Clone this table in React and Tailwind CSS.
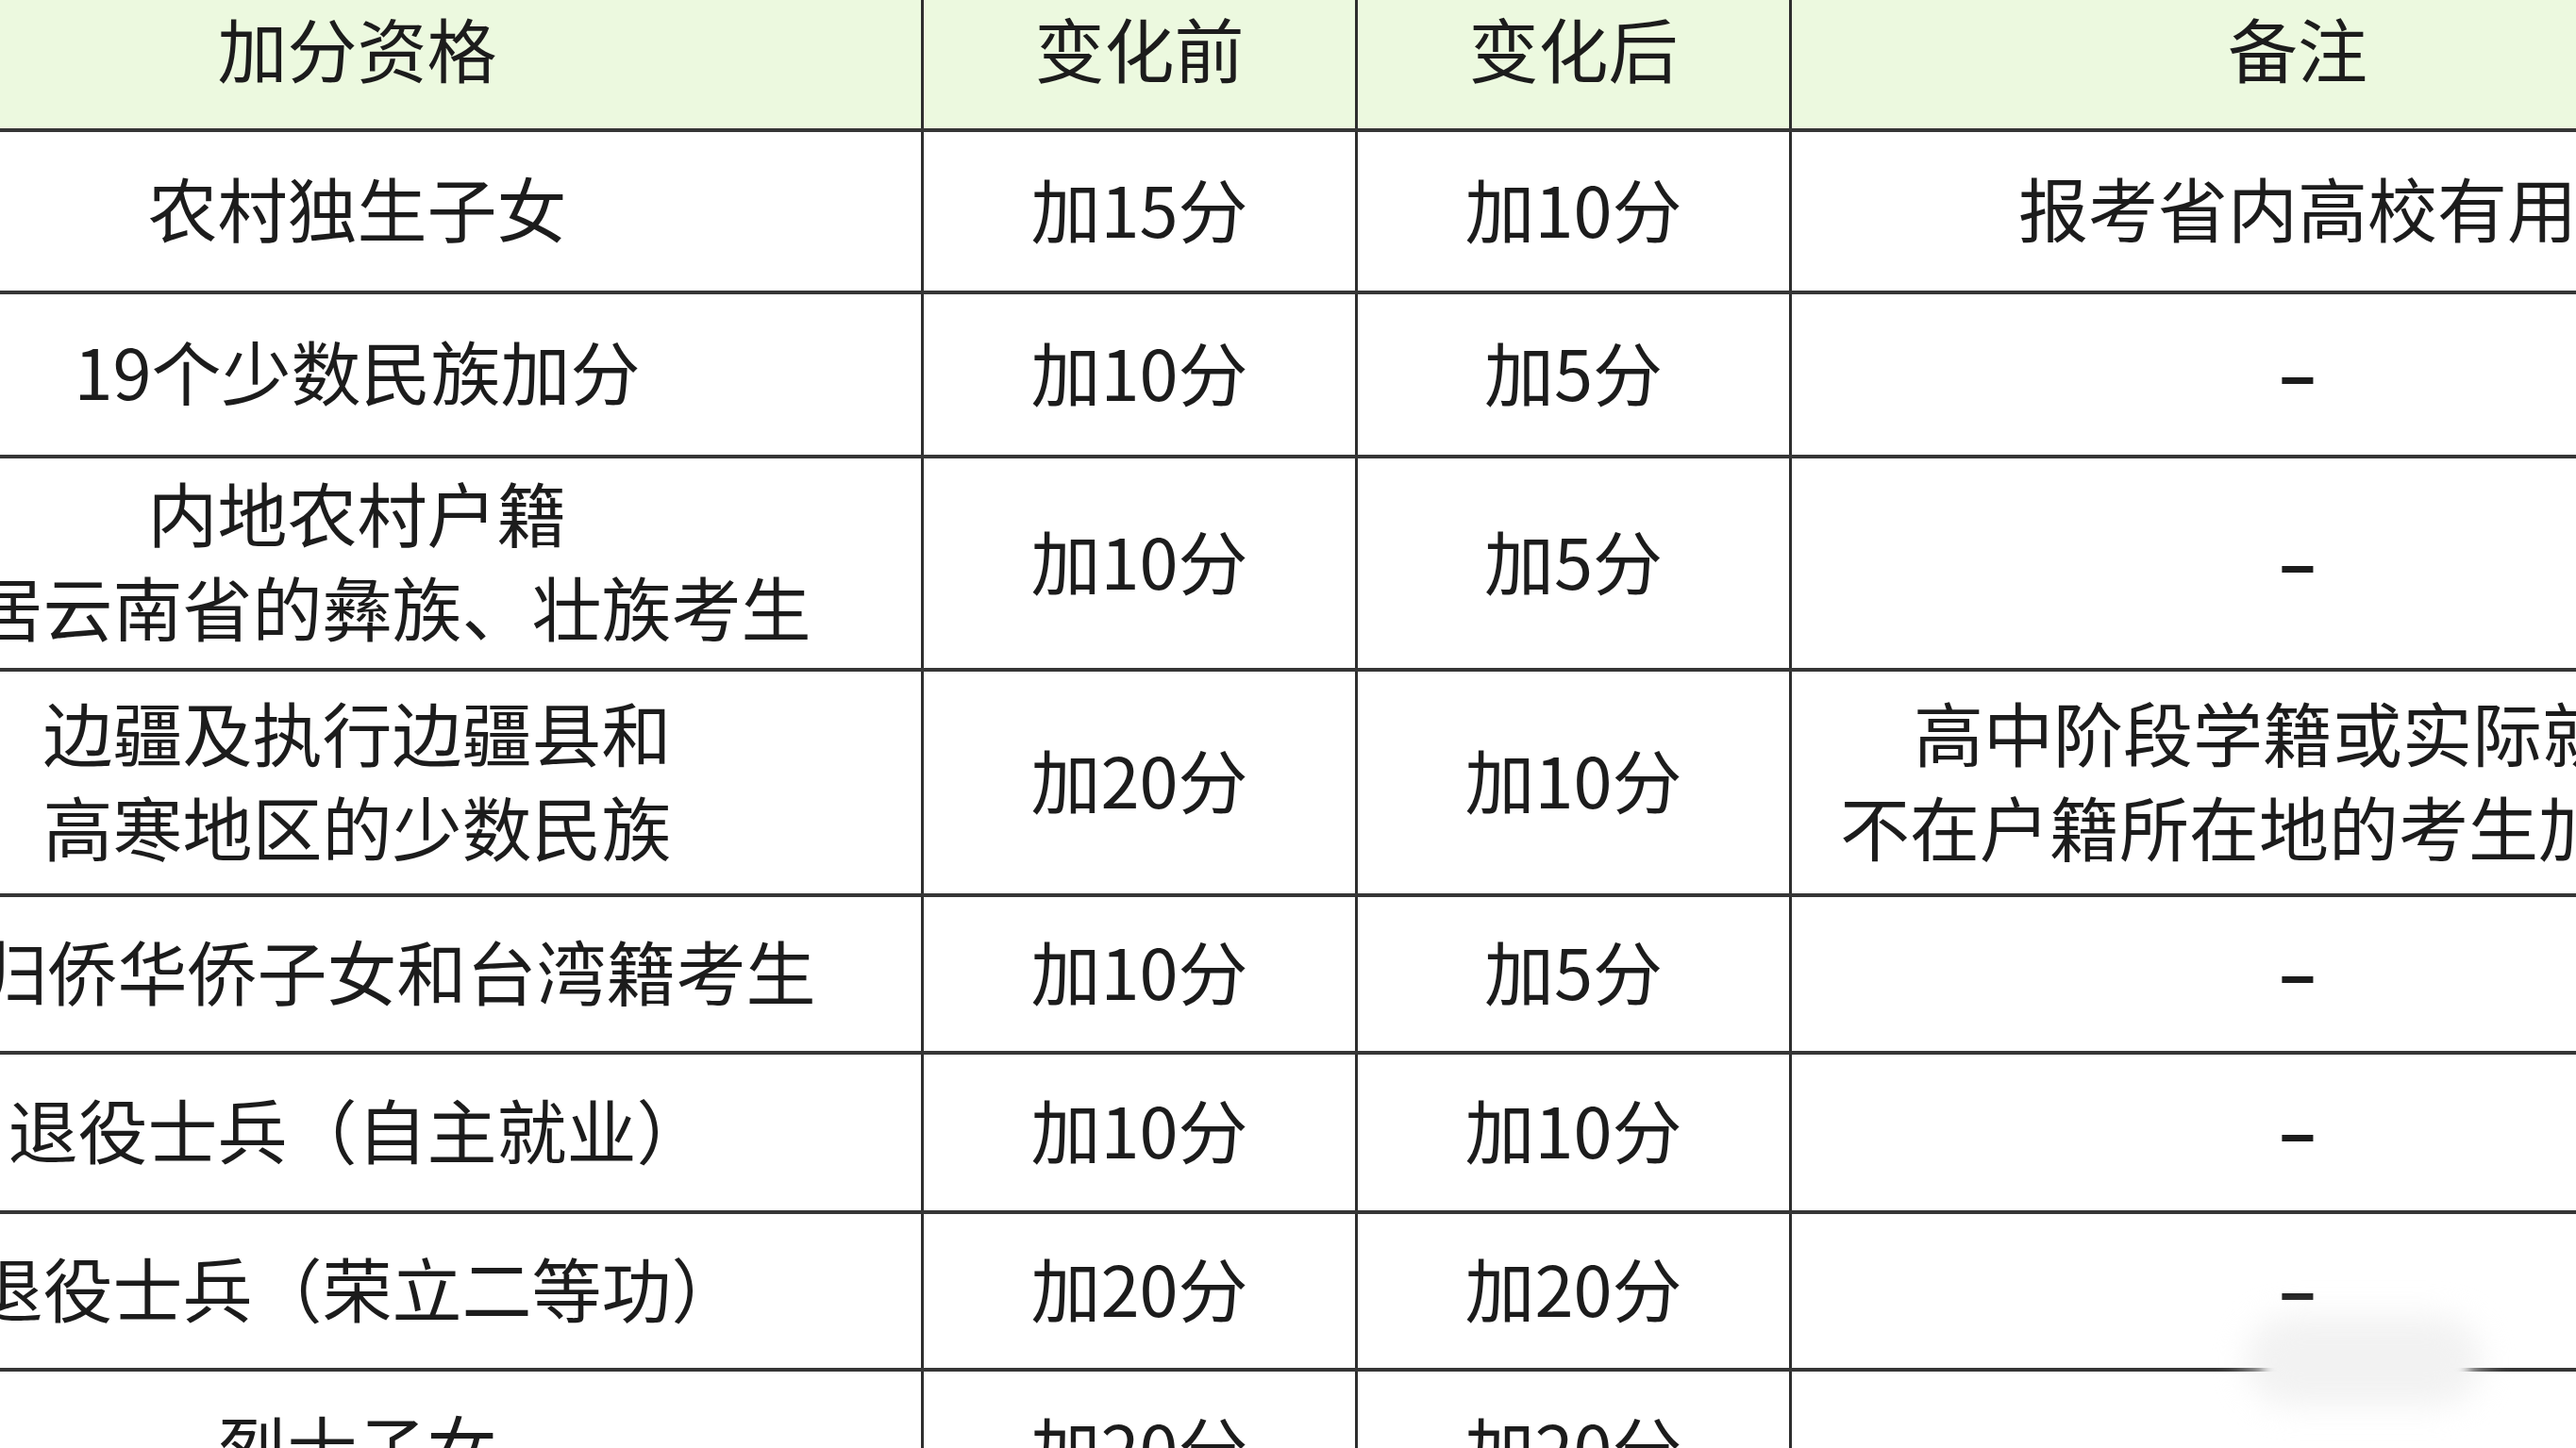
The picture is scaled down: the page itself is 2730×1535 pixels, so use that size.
import React from "react";

const rows = [
  { q: ["农村独生子女"], before: "加15分", after: "加10分", note: ["报考省内高校有用"], h: "h-[172px]" },
  { q: ["19个少数民族加分"], before: "加10分", after: "加5分", note: null, h: "h-[174px]" },
  { q: ["内地农村户籍", "聚居云南省的彝族、壮族考生"], before: "加10分", after: "加5分", note: null, h: "h-[226px]" },
  {
    q: ["边疆及执行边疆县和", "高寒地区的少数民族"],
    before: "加20分",
    after: "加10分",
    note: ["高中阶段学籍或实际就读", "不在户籍所在地的考生加10分"],
    h: "h-[239px]",
  },
  { q: ["归侨华侨子女和台湾籍考生"], before: "加10分", after: "加5分", note: null, h: "h-[167px]", shift: true },
  { q: ["退役士兵（自主就业）"], before: "加10分", after: "加10分", note: null, h: "h-[169px]" },
  { q: ["退役士兵（荣立二等功）"], before: "加20分", after: "加20分", note: null, h: "h-[167px]" },
  { q: ["烈士子女"], before: "加20分", after: "加20分", note: null, h: "h-[170px]" },
];

const Lines = ({ lines }) => (
  <div className="flex flex-col items-center leading-[100px] whitespace-nowrap">
    {lines.map((l, i) => (
      <span key={i}>{l}</span>
    ))}
  </div>
);

const Row = ({ row }) => (
  <div className={`flex ${row.h} border-b-4 border-[#363636]`}>
    <div className="flex w-[1198px] shrink-0 items-center justify-center border-r-[3px] border-[#2e2e2e] pb-[10px]">
      <div className={row.shift ? "pl-[84px]" : ""}>
        <Lines lines={row.q} />
      </div>
    </div>
    <div className="flex w-[460px] shrink-0 items-center justify-center border-r-[3px] border-[#2e2e2e] pb-[10px]">
      {row.before}
    </div>
    <div className="flex w-[460px] shrink-0 items-center justify-center border-r-[3px] border-[#2e2e2e] pb-[10px]">
      {row.after}
    </div>
    <div className="flex w-[1072px] shrink-0 items-center justify-center pb-[10px]">
      {row.note ? <Lines lines={row.note} /> : <span className="font-bold">–</span>}
    </div>
  </div>
);

export default function App() {
  return (
    <main
      className="relative h-[1535px] w-full overflow-hidden bg-white text-[74px] text-[#1c1c1c]"
      style={{ fontFamily: '"Noto Sans CJK SC", "Noto Sans", sans-serif' }}
    >
      <div className="ml-[-219px] mt-[-28px] w-[3190px]">
        <div className="flex h-[168px] border-b-4 border-[#363636] bg-[#ecf9df]">
          <div className="flex w-[1198px] shrink-0 items-center justify-center border-r-[3px] border-[#2e2e2e] pb-[10px]">
            加分资格
          </div>
          <div className="flex w-[460px] shrink-0 items-center justify-center border-r-[3px] border-[#2e2e2e] pb-[10px]">
            变化前
          </div>
          <div className="flex w-[460px] shrink-0 items-center justify-center border-r-[3px] border-[#2e2e2e] pb-[10px]">
            变化后
          </div>
          <div className="flex w-[1072px] shrink-0 items-center justify-center pb-[10px]">备注</div>
        </div>
        {rows.map((row, i) => (
          <Row key={i} row={row} />
        ))}
      </div>
      {/* blurred watermark smudge over the bottom-right line */}
      <div className="absolute left-[2400px] top-[1415px] h-[70px] w-[215px] rounded-full bg-white blur-[6px]" />
      <div className="absolute left-[2380px] top-[1395px] h-[95px] w-[250px] rounded-full bg-[#ededed]/70 blur-[16px]" />
    </main>
  );
}
